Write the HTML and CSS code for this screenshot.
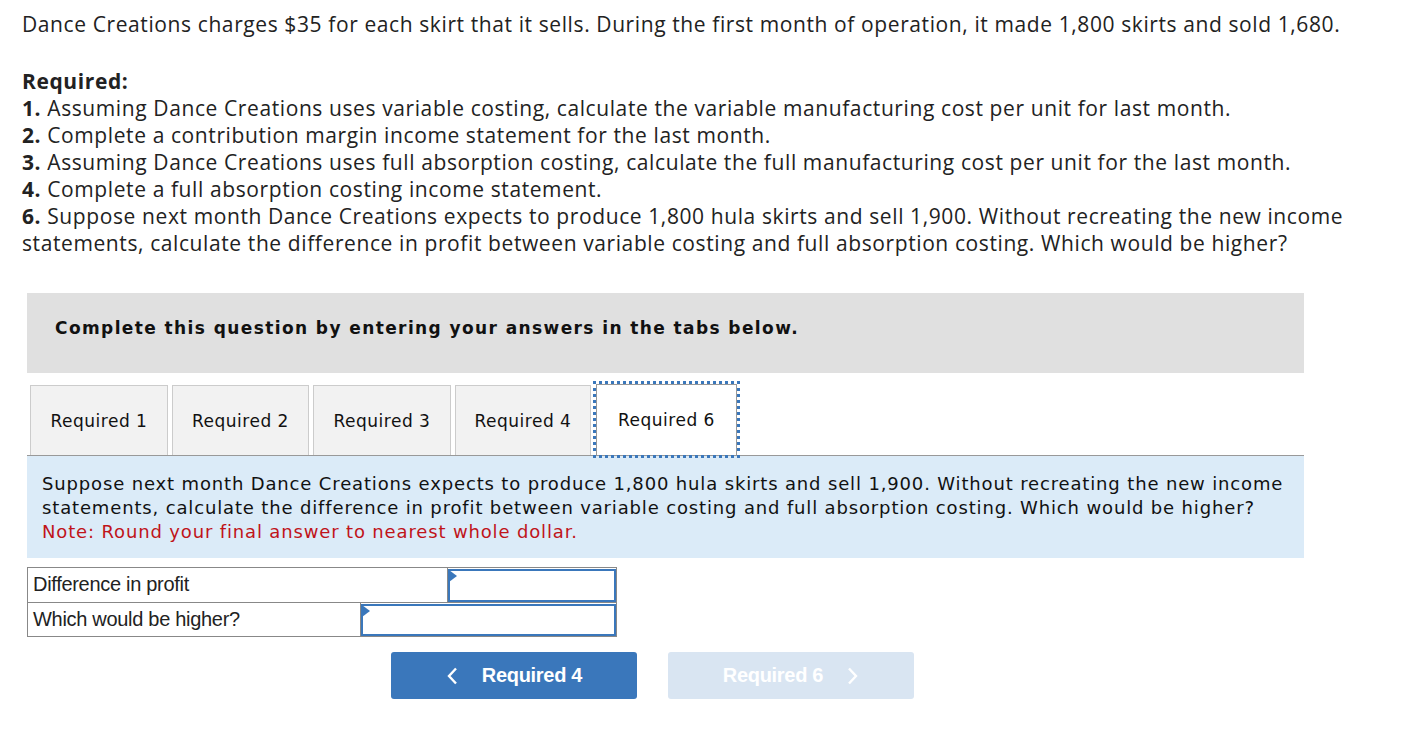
FILE: index.html
```html
<!DOCTYPE html>
<html>
<head>
<meta charset="utf-8">
<link rel="stylesheet" href="styles.css">
</head>
<body>
<div class="page">
  <p class="intro">Dance Creations charges $35 for each skirt that it sells. During the first month of operation, it made 1,800 skirts and sold 1,680.</p>
  <div class="required">
    <div class="req-title">Required:</div>
    <div><b>1.</b> Assuming Dance Creations uses variable costing, calculate the variable manufacturing cost per unit for last month.</div>
    <div><b>2.</b> Complete a contribution margin income statement for the last month.</div>
    <div><b>3.</b> Assuming Dance Creations uses full absorption costing, calculate the full manufacturing cost per unit for the last month.</div>
    <div><b>4.</b> Complete a full absorption costing income statement.</div>
    <div><b>6.</b> Suppose next month Dance Creations expects to produce 1,800 hula skirts and sell 1,900. Without recreating the new income statements, calculate the difference in profit between variable costing and full absorption costing. Which would be higher?</div>
  </div>

  <div class="instr">Complete this question by entering your answers in the tabs below.</div>

  <div class="tabs">
    <div class="tab t1">Required 1</div>
    <div class="tab t2">Required 2</div>
    <div class="tab t3">Required 3</div>
    <div class="tab t4">Required 4</div>
    <div class="tab active">Required 6</div>
  </div>

  <div class="panel">
    <div>Suppose next month Dance Creations expects to produce 1,800 hula skirts and sell 1,900. Without recreating the new income statements, calculate the difference in profit between variable costing and full absorption costing. Which would be higher?</div>
    <div class="note">Note: Round your final answer to nearest whole dollar.</div>
  </div>

  <div class="answers">
    <div class="row">
      <div class="label l1">Difference in profit</div>
      <div class="input"><span class="flag"></span></div>
    </div>
    <div class="row">
      <div class="label l2">Which would be higher?</div>
      <div class="input"><span class="flag"></span></div>
    </div>
  </div>

  <div class="nav">
    <div class="btn prev"><svg class="chev" width="12" height="18" viewBox="0 0 12 18"><path d="M10 1.5 L3 9 L10 16.5" fill="none" stroke="#fff" stroke-width="2.4"/></svg>Required 4</div>
    <div class="btn next">Required 6<svg class="chev" width="12" height="18" viewBox="0 0 12 18"><path d="M2 1.5 L9 9 L2 16.5" fill="none" stroke="#fff" stroke-width="2.4"/></svg></div>
  </div>
</div>
</body>
</html>
```
FILE: styles.css
```css
* { box-sizing: border-box; }
body {
  margin: 0;
  background: #fff;
  color: #222;
}
.page {
  padding: 11px 0 0 22px;
  width: 1406px;
}
.intro {
  margin: 0;
  width: 1360px;
  font-family: "Open Sans", sans-serif;
  font-size: 21px;
  line-height: 27px;
  letter-spacing: 0.6px;
  color: #222;
}
.required {
  margin-top: 30px;
  width: 1362px;
  font-family: "Open Sans", sans-serif;
  font-size: 21px;
  line-height: 27px;
  letter-spacing: 0.6px;
  color: #222;
}
.req-title { font-weight: bold; }
.required b { font-weight: bold; }
.instr {
  margin: 36px 0 0 5px;
  width: 1277px;
  height: 80px;
  background: #e0e0e0;
  padding: 25px 0 0 28px;
  font-family: Verdana, "DejaVu Sans", sans-serif;
  font-weight: bold;
  font-size: 17px;
  letter-spacing: 1.4px;
  color: #111;
}
.tabs {
  display: flex;
  margin: 12px 0 0 5px;
  width: 1277px;
  border-bottom: 1px solid #999;
  height: 71px;
  padding-left: 3px;
  gap: 4px;
}
.tab {
  width: 138px;
  height: 70px;
  background: #f2f2f2;
  border: 1px solid #ccc;
  border-bottom: none;
  display: flex;
  align-items: center;
  justify-content: center;
  font-family: Verdana, "DejaVu Sans", sans-serif;
  font-size: 17px;
  letter-spacing: 0.5px;
  color: #111;
}
.t2 { width: 137px; }
.t4 { width: 136px; }
.tab.active {
  width: 141px;
  margin-left: 1px;
  background: #fff;
  border: 1px solid #999;
  border-bottom: none;
  outline: 3px dotted #3a77bb;
  outline-offset: 0px;
  height: 71px;
  margin-top: -1px;
}
.panel {
  margin-left: 5px;
  width: 1277px;
  background: #dbebf8;
  padding: 16px 8px 14px 15px;
  font-family: Verdana, "DejaVu Sans", sans-serif;
  font-size: 18px;
  line-height: 24px;
  letter-spacing: 0.85px;
  color: #111;
}
.note { color: #c0141a; }
.answers {
  margin: 9px 0 0 5px;
  width: 590px;
  border: 1px solid #888;
  font-family: "Liberation Sans", Arial, sans-serif;
  font-size: 20px;
  letter-spacing: -0.3px;
  color: #222;
}
.row {
  display: flex;
  height: 34px;
}
.row + .row { border-top: 1px solid #888; }
.label {
  padding: 5px 0 0 5px;
  border-right: 1px solid #888;
}
.l1 { width: 420px; }
.l2 { width: 333px; }
.input {
  flex: 1;
  position: relative;
  border: 2px solid #3a77bb;
  margin: 1px 0 0 0;
}
.flag {
  position: absolute;
  left: -1px;
  top: -1px;
  width: 0;
  height: 0;
  border-top: 6px solid transparent;
  border-bottom: 6px solid transparent;
  border-left: 8px solid #3a77bb;
}
.nav {
  display: flex;
  margin: 15px 0 0 369px;
  gap: 31px;
}
.btn {
  width: 246px;
  height: 47px;
  border-radius: 3px;
  display: flex;
  align-items: center;
  justify-content: center;
  font-family: "Liberation Sans", Arial, sans-serif;
  font-weight: bold;
  font-size: 20px;
  color: #fff;
  letter-spacing: -0.3px;
}
.prev { background: #3a77bb; }
.next { background: #d9e5f2; }
.prev .chev { margin-right: 24px; }
.next .chev { margin-left: 24px; }
```
